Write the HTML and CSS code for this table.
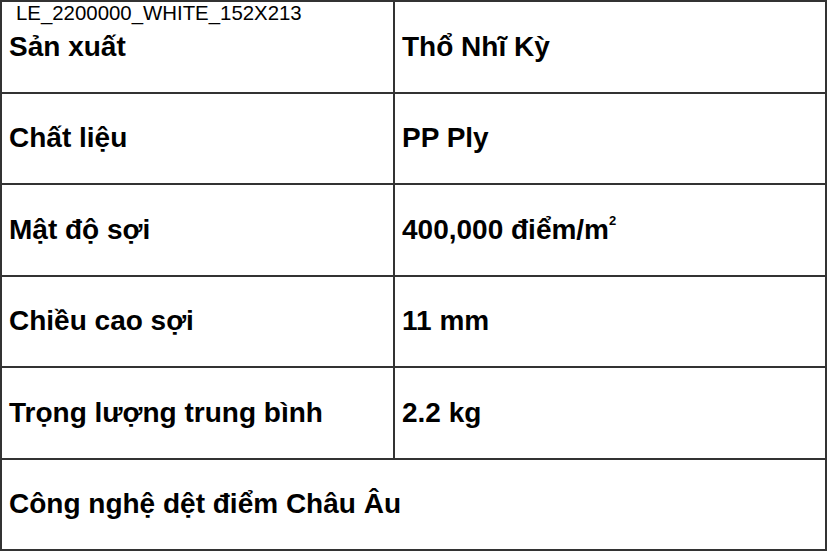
FILE: index.html
```html
<!DOCTYPE html>
<html lang="vi">
<head>
<meta charset="utf-8">
<link rel="stylesheet" href="styles.css">
</head>
<body>
<div class="page">
  <div class="sku">LE_2200000_WHITE_152X213</div>
  <table class="spec">
    <tr><td class="k">Sản xuất</td><td class="v">Thổ Nhĩ Kỳ</td></tr>
    <tr><td class="k">Chất liệu</td><td class="v">PP Ply</td></tr>
    <tr><td class="k">Mật độ sợi</td><td class="v">400,000 điểm/m<sup>2</sup></td></tr>
    <tr><td class="k">Chiều cao sợi</td><td class="v">11 mm</td></tr>
    <tr><td class="k">Trọng lượng trung bình</td><td class="v">2.2 kg</td></tr>
    <tr><td class="k" colspan="2">Công nghệ dệt điểm Châu Âu</td></tr>
  </table>
</div>
</body>
</html>
```

FILE: styles.css
```css
html, body {
  margin: 0;
  padding: 0;
  background: #fff;
}
.page {
  position: relative;
  width: 827px;
  height: 551px;
  font-family: "Liberation Sans", Arial, sans-serif;
  color: #000;
}
.sku {
  position: absolute;
  left: 16px;
  top: 2px;
  font-size: 20.4px;
  line-height: 23px;
}
.spec {
  width: 827px;
  height: 551px;
  border-collapse: collapse;
  table-layout: fixed;
}
.spec td {
  border: 2px solid #333;
  font-size: 28px;
  font-weight: bold;
  padding: 0 0 0 7px;
  height: 89px;
  vertical-align: middle;
}
.spec td.k {
  width: 384px;
}
.spec sup {
  font-size: 13px;
  vertical-align: 14px;
  line-height: 0;
}
```
